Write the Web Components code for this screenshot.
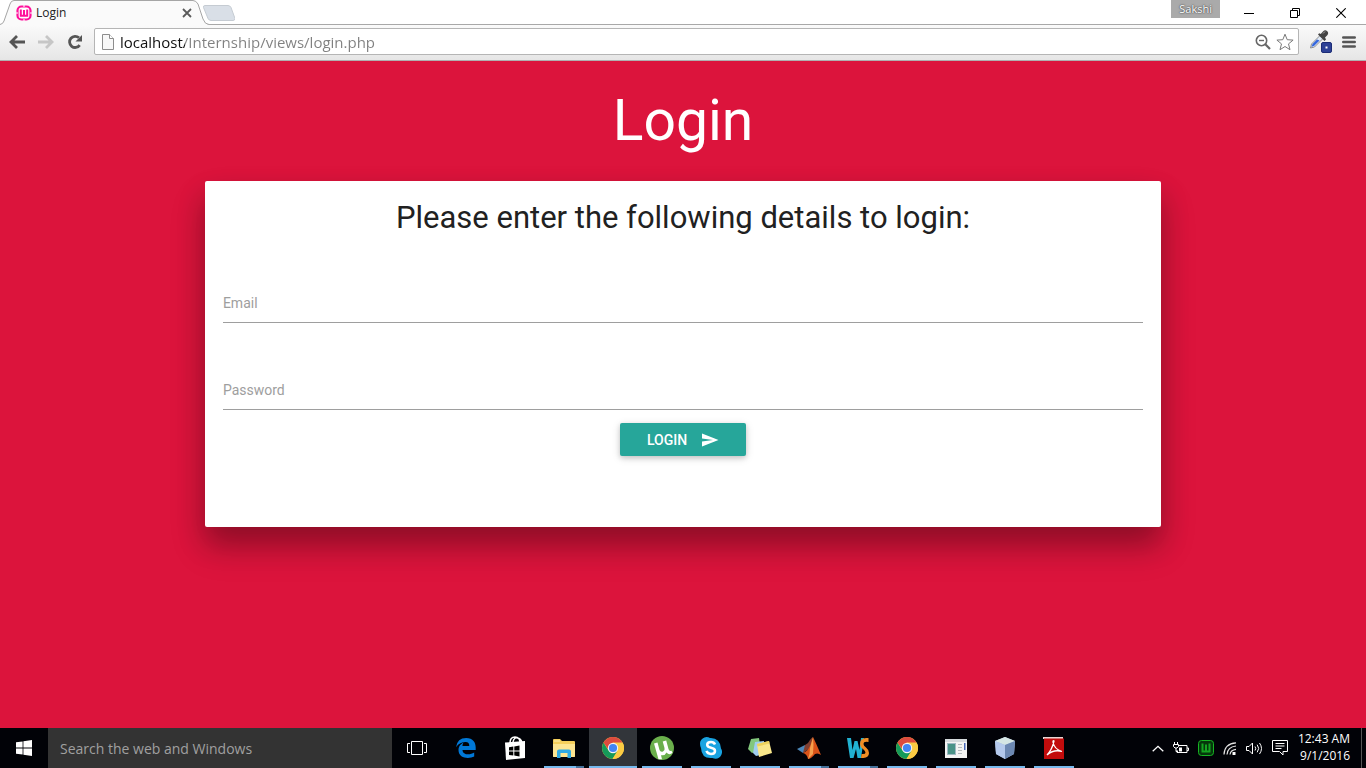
<!DOCTYPE html>
<html lang="en">
<head>
<meta charset="utf-8">
<title>Login</title>
<style>
html, body { margin: 0; height: 100%; }
body { font-family: "Open Sans", "Noto Sans", sans-serif; }
</style>
</head>
<body>
<desk-top>
  <browser-tab slot="tab">Login</browser-tab>
  <login-page slot="page"></login-page>
</desk-top>

<script>
const define = (name, html, setup) => {
  const template = document.createElement('template');
  template.innerHTML = html;
  customElements.define(name, class extends HTMLElement {
    constructor() {
      super();
      this.attachShadow({ mode: 'open' }).append(template.content.cloneNode(true));
    }
    connectedCallback() { if (setup) setup(this, this.shadowRoot); }
  });
};

/* Icon drawings: [width, height, markup] */
const icons = {
  wamp: [16, 16, `<rect x="1.500" y="1.500" width="13" height="13" rx="4" fill="#fff" stroke="#ff0f9b" stroke-width="2.200"/><path d="M4.800 4.500v6.300h6.400V4.500M8 5v5" fill="none" stroke="#ff0f9b" stroke-width="2"/><path d="M0 8h2M14 8h2M8 0v2M8 14v2" stroke="#fff" stroke-width="1"/>`],
  close: [10, 10, `<path d="m1 1 8 8M9 1 1 9" stroke="#5a5a5a" stroke-width="1.800"/>`],
  back: [16, 14, `<path d="M8 1 2 7l6 6M2 7h14" fill="none" stroke="#555" stroke-width="2.800"/>`],
  forward: [16, 14, `<path d="m8 1 6 6-6 6M14 7H0" fill="none" stroke="#c6c6c6" stroke-width="2.800"/>`],
  reload: [16, 16, `<path d="M12.700 11.200A5.600 5.600 0 1 1 12 3.800" fill="none" stroke="#555" stroke-width="2.800"/><path d="M15 1v6.500H8.500Z" fill="#555"/>`],
  file: [12, 16, `<path d="M.5.500h7l4 4v11H.5Z" fill="#f8f8f8" stroke="#8d8d8d"/><path d="M7.500.500v4h4" fill="#fff" stroke="#8d8d8d"/>`],
  zoomout: [16, 16, `<circle cx="6.500" cy="6.500" r="5.200" fill="none" stroke="#666" stroke-width="1.600"/><path d="M4 6.500h5" stroke="#666" stroke-width="1.400"/><path d="m10.300 10.300 4.700 4.700" stroke="#666" stroke-width="2.200"/>`],
  star: [18, 18, `<path d="m9 1.200 2.200 5.500 5.900.4-4.600 3.800 1.500 5.800L9 13.500l-5 3.200 1.500-5.800L.9 7.100l5.900-.4Z" fill="#fff" stroke="#7a7a7a" stroke-linejoin="round"/>`],
  dropper: [24, 24, `<path d="m1.500 18 1-4L11 5.500l3 3L5.500 17Z" fill="#dfe8f4" stroke="#777" stroke-width=".8"/><path d="m2.500 17 1-3L8 9.500l2.500 1L5.500 15.500Z" fill="#3567dd"/><path d="m9 4.500 6.500 6.500 1.500-1.500-1-2L18.500 5q1.500-2.500-.5-4t-4 .5L11.700 4l-1.500-.8Z" fill="#444"/><path d="m14 3.500 2-2" stroke="#aaa"/><rect x="12.500" y="12.500" width="10" height="10" rx="1.500" fill="#2d4196" stroke="#1c2c76"/><path d="M16.500 16.500h2v2h-2Z" fill="#fff"/>`],
  menu: [14, 12, `<path d="M1.300 1.500h11.400M1.300 6h11.400M1.300 10.500h11.400" stroke="#555" stroke-width="2.600" stroke-linecap="round"/>`],
  minimize: [10, 10, `<path d="M0 5.500h10" stroke="#000"/>`],
  restore: [10, 10, `<path d="M.5 2.500h7v7h-7ZM2.500 2V.5h7v7H8" fill="none" stroke="#000"/>`],
  exit: [10, 10, `<path d="m.3.300 9.400 9.400M9.700.300.3 9.700" stroke="#000" stroke-width="1.100"/>`],
  send: [18, 14, `<path d="M1 13.500 17.500 7 1 .5v5L12 7 1 8.500Z" fill="#fff"/>`],
  windows: [16, 16, `<path d="M0 2.300 6.600 1.400v6.200H0ZM7.400 1.300 16 0v7.600H7.400ZM0 8.400h6.600v6.200L0 13.700ZM7.400 8.400H16V16l-8.600-1.300Z" fill="#fff"/>`],
  taskview: [20, 14, `<path d="M4.500.5h11v13h-11ZM3 2.500H.5v9H3M17 2.500h2.500v9H17" fill="none" stroke="#fff"/>`],
  edge: [20, 20, `<path d="M0 9.300Q1.300 0 10.200 0C17 0 19.700 4.600 19.700 9.500v2.400H6.500c.2 5 7.200 5.600 11.700 2.600v4C13.500 21 2.500 21 2.500 12c0-4 2.300-6.300 5.200-7.600C6.800 5.400 6.500 6.600 6.500 8h6.800c0-2.800-1-4-3.700-4C6 4 2.500 5.500 0 9.300Z" fill="#0078d7"/>`],
  store: [22, 24, `<path d="M6 7Q6 1 11 1t5 6M9 6Q10 0 15 2.500 18 4 18 8" fill="none" stroke="#fff" stroke-width="1.500"/><path d="M1 6.500 21 5v17L2 24Z" fill="#fff"/><path d="M5 11.200 9.300 10.500v4H5ZM10.300 10.400 15.500 9.600v4.900h-5.200ZM5 15.500h4.300v4L5 18.900ZM10.300 15.500h5.200v4.900l-5.200-.8Z" fill="#000"/>`],
  folder: [22, 19, `<path d="M0 1q0-1 1-1h6l2 2h12q1 0 1 1v14q0 1-1 1H1q-1 0-1-1Z" fill="#f5cf5b"/><path d="M0 5h22v12q0 1-1 1H1q-1 0-1-1Z" fill="#fde591"/><path d="M4 19v-6.500q0-2 2-2h10q2 0 2 2V19h-3.500v-5h-7v5Z" fill="#2fa9e2"/><path d="M1 2h6" stroke="#fff1b5"/>`],
  chrome: [22, 22, `<circle cx="11" cy="11" r="11" fill="#fbcb43"/><path d="M1.500 5.500A11 11 0 0 0 10.500 22L15.500 14 11 11 6.500 13.500Z" fill="#159a59"/><path d="M20.500 5.500H11v5.500l4.500 3L10.500 22A11 11 0 0 0 20.500 5.500Z" fill="#fbcb43"/><path d="M1.500 5.500A11 11 0 0 1 20.500 5.500H11L6 12Z" fill="#dd4b3e"/><circle cx="11" cy="11" r="5.200" fill="#f4f4f4"/><circle cx="11" cy="11" r="4.100" fill="#4285f4"/>`],
  torrent: [24, 24, `<circle cx="12" cy="12" r="12" fill="#6aaf4c"/><path d="M4 7.500 7.500 6.500 9.500 14q1 2.500 3.500 1.500 2.200-1 1.500-3.500L12.700 5.500l3.500-1L18.500 13q.7 2.500 3 1.800l1 2.200q-3.500 2.500-6-.5-1.500 3.500-5.500 2.700l1 4H8.500Z" fill="#fff"/>`],
  skype: [22, 22, `<path d="M6.500 0q2 0 3.500 1 10-.5 11 10.500 2 3 .3 6.500-3 5.500-9 3Q1.500 22 1 11-.5 8 .3 4.500 2 .5 6.500 0Z" fill="#19a3e1"/><path d="M15 7.500Q14 5 11 5 7.200 5 7.200 7.800q0 2.200 3.800 2.900 4 .8 4 3.200 0 3-4 3-3.500 0-4.500-3" fill="none" stroke="#fff" stroke-width="2.500"/>`],
  notes: [24, 20, `<path d="m3 1 8-1 2 12-9 3-4-4Z" fill="#82c77c"/><path d="m7 4 9-1 1 13-9 2-3-3Z" fill="#9fcdf0"/><path d="m9 6 12-3 3 12-13 4Z" fill="#f9e78b"/><path d="m9 6 12-3 .6 2.500L9.400 8.500Z" fill="#edd25c"/>`],
  matlab: [24, 22, `<path d="m0 12 8-4 4 3-6 5Z" fill="#4d87b8"/><path d="m8 8 3-2q3-5 5-6l-3 11-7 5Z" fill="#7f3e30"/><path d="M16 0q3 6 8 18-3-2.500-6-1-4 5-7 5-1-5-5-6 5-2 7-7Z" fill="#d95319"/><path d="M16 0q1 8 0 17l-5 5q2-5 2-11Z" fill="#f5a04d"/>`],
  storm: [22, 20, `<path d="M0 0h4l1.500 12L7.500 3h3l2 9L14 0h3l-3 20h-3.500L9 11 6.500 20H3Z" fill="#21b2d2"/><path d="M21.500 0v4q-5-1-5 2 0 1.500 2.500 3.500 3 2.300 3 5.500 0 5.500-8 5l.5-4q4 .5 4-1.500 0-1.500-2.500-3.500-3-2-3-5Q13-.5 21.500 0Z" fill="#f08d24"/>`],
  sheet: [22, 19, `<path d="M0 0h22v19H0Z" fill="#f3f4f3"/><path d="M0 0h22v3H0Z" fill="#d5dadd"/><path d="M2 4h9v12H2Z" fill="#9fb9c4"/><path d="M3 5h7v10H3Z" fill="#4a9388"/><path d="M13 5.500h4M13 8.500h4M13 11.500h4M13 14.500h4" stroke="#b5babe"/><path d="M19 4h1.500v7H19Z" fill="#4868b8"/>`],
  cube: [22, 22, `<path d="m11 0 10 4-1 13-9 5-9-5L1 4Z" fill="#aac0df"/><path d="m11 0 10 4-10 4L1 4Z" fill="#d5e6e4"/><path d="m11 8 10-4-1 13-9 5Z" fill="#6c88b2"/><path d="m1 4 10 4v14l-9-5Z" fill="#b4c9ec"/>`],
  reader: [22, 22, `<path d="M0 0h20v2H0Z" fill="#e9d6d3"/><path d="M1 1.500h20V22H1Z" fill="#c20c0c"/><path d="M4 18q5-5 7-14-1-1-1 1 1 7 9 9.500Q11 12 4 18Z" fill="none" stroke="#fff" stroke-width="1.300"/>`],
  chevron: [12, 7, `<path d="m.7 6.300 5.300-5 5.300 5" fill="none" stroke="#fff" stroke-width="1.300"/>`],
  battery: [16, 12, `<path d="M6 3.500h8v7H4V8M14 6h1.500v2.500H14" fill="none" stroke="#fff"/><path d="M6 5.500h3v4H6Z" fill="#fff"/><path d="M1.500 0v2M4.500 0v2M.5 2.500h5v2L4 6H2L.5 4.500ZM3 6v3.500h2" fill="none" stroke="#fff"/>`],
  tray: [16, 16, `<rect x=".5" y=".5" width="15" height="15" rx="3" fill="#05360b" stroke="#16b523"/><path d="M4.500 3.500v8h7v-8M8 4.500v6" fill="none" stroke="#14a421" stroke-width="2"/>`],
  wifi: [14, 13, `<path d="M1 12.500Q1.500 1.500 13 .8M4 12.500Q4.500 5 13 4M7 12.500Q7.500 8 13 7.300" fill="none" stroke="#e4e4e4" stroke-width="1.200"/><path d="M9.500 10h3v3h-3Z" fill="#fff"/>`],
  sound: [17, 13, `<path d="M.5 4.500H3L6.500 1v11L3 8.500H.5Z" fill="none" stroke="#fff"/><path d="M9 4.500q1.500 2 0 4M11.200 2.700q3 3.800 0 7.600M13.500 1q4 5.500 0 11" fill="none" stroke="#fff"/>`],
  note: [16, 16, `<path d="M.5.5h15v11H11v3.500L7.500 11.500h-7ZM3.500 3.500h9M3.500 6h9M3.500 8.500h6" fill="none" stroke="#fff"/>`],
};

define('app-icon', `
<style>:host { display: inline-flex; flex: none; } svg { display: block; }</style>
<svg aria-hidden="true"></svg>`,
(el, root) => {
  const [w, h, art] = icons[el.getAttribute('name')];
  const svg = root.querySelector('svg');
  svg.setAttribute('width', w);
  svg.setAttribute('height', h);
  svg.setAttribute('viewBox', `0 0 ${w} ${h}`);
  svg.innerHTML = art;
});

define('browser-tab', `
<style>
:host { display: grid; grid-template-columns: 100%; flex: none; width: 205px; height: 25px; font-size: 12px; color: #222; }
svg, .row { grid-area: 1 / 1; }
.row { display: flex; align-items: center; gap: 4px; padding: 0 13px 0 16px; }
.name { flex: 1; line-height: 16px; }
button { display: flex; border: 0; padding: 0; background: none; }
</style>
<svg width="210" height="25" viewBox="0 0 210 25" aria-hidden="true"><path d="M0 24.500Q3 24 4 21L10 4Q11 .5 14 .5H193Q196 .5 198 4L203 19Q205 24.500 209 24.500V25H0Z" fill="#fafafa"/><path d="M0 24.500Q3 24 4 21L10 4Q11 .5 14 .5H193Q196 .5 198 4L203 19Q205 24.500 209 24.500" fill="none" stroke="#a5a5a5"/></svg>
<div class="row"><app-icon name="wamp"></app-icon><span class="name"><slot></slot></span><button aria-label="Close tab"><app-icon name="close"></app-icon></button></div>`);

define('browser-bar', `
<style>
:host { display: block; flex: none; }
button { display: flex; border: 0; padding: 0; background: none; }
.strip { display: flex; height: 25px; background: linear-gradient(#a8a8a8, #a8a8a8) 0 100% / 100% 1px no-repeat #fff; }
.new { margin: 5px 0 0 -2px; height: 16px; }
.space { flex: 1; }
.user { height: 18px; padding: 0 8px; background: #aaa; color: #fff; font-size: 11px; line-height: 18px; text-shadow: 0 0 2px #444, 0 0 1px #444; }
.window { display: flex; align-items: center; gap: 36px; padding: 0 20px 0 24px; }
.tools { display: flex; align-items: center; box-sizing: border-box; height: 36px; padding: 0 10px 2px 9px; background: linear-gradient(#fafafa, #e6e6e6); border-bottom: 1px solid #b0b0b0; }
.nav { display: flex; align-items: center; gap: 13px; margin-right: 11px; }
.address { display: flex; flex: 1; align-items: center; gap: 6px; box-sizing: border-box; height: 27px; padding: 0 4px 0 7px; background: #fff; border: 1px solid #b5b5b5; border-radius: 2px; }
.actions { display: flex; align-items: center; gap: 5px; }
input { flex: 1; min-width: 0; height: 24px; border: 0; padding: 0; outline: 0; font: 15px/24px "Open Sans", "Noto Sans", sans-serif; color: transparent; background: linear-gradient(90deg, #111 65px, #808080 65px); -webkit-background-clip: text; background-clip: text; }
.extras { display: flex; align-items: center; gap: 9px; margin-left: 10px; }
</style>
<div class="strip">
  <slot></slot>
  <button class="new" aria-label="New tab"><svg width="32" height="16" viewBox="0 0 32 16"><path d="M2 .5h23q2 0 3 2l4 11q0 2-2 2H8q-2 0-3-2L.5 2.500Q0 .5 2 .5Z" fill="#d9dfe7" stroke="#c5cbd2"/></svg></button>
  <div class="space"></div>
  <div class="user">Sakshi</div>
  <div class="window">
    <button aria-label="Minimize"><app-icon name="minimize"></app-icon></button>
    <button aria-label="Restore"><app-icon name="restore"></app-icon></button>
    <button aria-label="Close"><app-icon name="exit"></app-icon></button>
  </div>
</div>
<div class="tools">
  <div class="nav">
    <button aria-label="Back"><app-icon name="back"></app-icon></button>
    <button aria-label="Forward"><app-icon name="forward"></app-icon></button>
    <button aria-label="Reload"><app-icon name="reload"></app-icon></button>
  </div>
  <div class="address">
    <app-icon name="file"></app-icon>
    <input type="text" aria-label="Address" value="localhost/Internship/views/login.php" spellcheck="false">
    <div class="actions">
      <button aria-label="Zoom"><app-icon name="zoomout"></app-icon></button>
      <button aria-label="Bookmark"><app-icon name="star"></app-icon></button>
    </div>
  </div>
  <div class="extras">
    <button aria-label="Color picker"><app-icon name="dropper"></app-icon></button>
    <button aria-label="Menu"><app-icon name="menu"></app-icon></button>
  </div>
</div>`);

define('text-field', `
<style>
:host { display: grid; }
label, input { grid-area: 1 / 1; }
label { padding-top: 12px; font-size: 14px; line-height: 20px; color: #9e9e9e; pointer-events: none; z-index: 1; }
input { box-sizing: border-box; width: 100%; height: 42px; border: 0; border-bottom: 1px solid #9e9e9e; padding: 0; background: none; outline: 0; font: 16px Roboto, sans-serif; }
:host([filled]) label { visibility: hidden; }
</style>
<label for="field"><slot></slot></label><input id="field">`,
(el, root) => {
  const input = root.querySelector('input');
  input.type = el.getAttribute('type');
  input.oninput = () => el.toggleAttribute('filled', input.value !== '');
});

define('login-page', `
<style>
:host { display: block; height: 100%; overflow: auto; background: #dc143c; font-family: Roboto, sans-serif; }
main { width: 70%; margin: 0 auto; padding-top: 28px; }
h1 { margin: 0 0 29px; font-size: 57px; line-height: 63px; font-weight: 400; color: #fff; text-align: center; }
form { display: flex; flex-direction: column; padding: 20px 18px 71px; border-radius: 2px; background: #fff; box-shadow: 0 16px 28px 0 rgba(0,0,0,.22), 0 20px 36px 0 rgba(0,0,0,.18); }
h2 { margin: 0 0 46px; font-size: 31px; line-height: 34px; font-weight: 400; color: #212121; text-align: center; }
.fields { display: grid; gap: 45px; }
button { display: flex; align-items: center; align-self: center; gap: 14px; height: 33px; margin-top: 13px; padding: 0 27px; border: 0; border-radius: 2px; background: #26a69a; color: #fff; font: 500 14px Roboto, sans-serif; box-shadow: 0 2px 5px 0 rgba(0,0,0,.16), 0 2px 10px 0 rgba(0,0,0,.12); }
</style>
<main>
  <h1>Login</h1>
  <form onsubmit="return false">
    <h2>Please enter the following details to login:</h2>
    <div class="fields">
      <text-field type="email">Email</text-field>
      <text-field type="password">Password</text-field>
    </div>
    <button type="submit">LOGIN<app-icon name="send"></app-icon></button>
  </form>
</main>`);

define('task-item', `
<style>
:host { display: block; width: 48px; height: 40px; }
button { display: grid; place-items: center; width: 100%; height: 100%; border: 0; padding: 0; background: none; }
:host([open]) button { background: linear-gradient(#76b9ed, #76b9ed) 50% 100% / 40px 2px no-repeat; }
:host([group]) button { background: linear-gradient(90deg, #76b9ed 32px, #45719a 32px) 50% 100% / 40px 2px no-repeat; }
:host([active]) button { background: linear-gradient(#76b9ed, #76b9ed) 0 100% / 100% 2px no-repeat #32353a; }
</style>
<button></button>`,
(el, root) => {
  const button = root.querySelector('button');
  const icon = document.createElement('app-icon');
  icon.setAttribute('name', el.getAttribute('icon'));
  button.setAttribute('aria-label', el.getAttribute('icon'));
  button.replaceChildren(icon);
});

define('task-bar', `
<style>
:host { display: flex; flex: none; height: 40px; background: #010207; color: #fff; }
input { box-sizing: border-box; width: 344px; height: 40px; margin-right: 1px; border: 0; padding: 0 12px; background: #333; outline: 0; font: 14px "Open Sans", "Noto Sans", sans-serif; color: #fff; }
input::placeholder { color: #a0a0a0; }
nav { display: flex; flex: 1; gap: 1px; }
.tray { display: flex; align-items: center; gap: 9px; }
time { margin: 0 11px 0 10px; padding-top: 2px; font-size: 12px; line-height: 17px; text-align: right; }
.edge { width: 4px; height: 40px; border-left: 1px solid #555; }
</style>
<task-item icon="windows"></task-item>
<input type="search" aria-label="Search" placeholder="Search the web and Windows">
<nav>
  <task-item icon="taskview"></task-item>
  <task-item icon="edge"></task-item>
  <task-item icon="store"></task-item>
  <task-item icon="folder" group></task-item>
  <task-item icon="chrome" active></task-item>
  <task-item icon="torrent" open></task-item>
  <task-item icon="skype" open></task-item>
  <task-item icon="notes" open></task-item>
  <task-item icon="matlab" group></task-item>
  <task-item icon="storm" group></task-item>
  <task-item icon="chrome" open></task-item>
  <task-item icon="sheet" open></task-item>
  <task-item icon="cube" open></task-item>
  <task-item icon="reader" open></task-item>
</nav>
<div class="tray">
  <app-icon name="chevron"></app-icon>
  <app-icon name="battery"></app-icon>
  <app-icon name="tray"></app-icon>
  <app-icon name="wifi"></app-icon>
  <app-icon name="sound"></app-icon>
  <app-icon name="note"></app-icon>
</div>
<time>12:43 AM<br>9/1/2016</time>
<div class="edge"></div>`);

define('desk-top', `
<style>
:host { display: flex; flex-direction: column; height: 100vh; overflow: hidden; }
.page { flex: 1; min-height: 0; }
</style>
<browser-bar><slot name="tab"></slot></browser-bar>
<div class="page"><slot name="page"></slot></div>
<task-bar></task-bar>`);
</script>
</body>
</html>
